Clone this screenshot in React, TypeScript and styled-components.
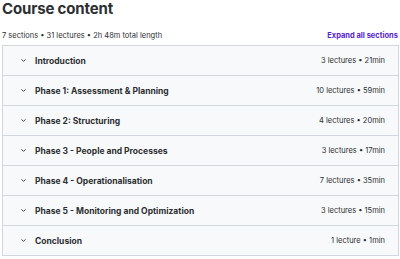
import React from "react";
import styled, { createGlobalStyle } from "styled-components";

const Global = createGlobalStyle`
  html, body { margin: 0; padding: 0; background: #ffffff; }
  body { font-family: Inter, "Noto Sans", sans-serif; color: #2d2f31; }
`;

const Page = styled.div`
  width: 400px;
  padding: 1px 1px 0 2px;
  box-sizing: border-box;
`;

const Title = styled.h2`
  margin: 0;
  font-size: 15px;
  line-height: 16px;
  font-weight: 700;
  letter-spacing: -0.15px;
`;

const Meta = styled.div`
  display: flex;
  justify-content: space-between;
  align-items: center;
  height: 14px;
  margin-top: 11px;
  margin-bottom: 3px;
  font-size: 7.5px;
`;

const Expand = styled.button`
  border: 0;
  background: none;
  padding: 0 1px 0 0;
  font-family: inherit;
  font-size: 7.5px;
  font-weight: 700;
  color: #5624d0;
  cursor: pointer;
`;

const Accordion = styled.div`
  border: 1px solid #d1d7dc;
  border-bottom: 0;
`;

const Row = styled.div`
  display: flex;
  align-items: center;
  height: 29px;
  padding: 0 13px 0 17px;
  background: #f7f9fa;
  border-bottom: 1px solid #d1d7dc;
`;

const Chevron = styled.svg`
  width: 7px;
  height: 7px;
  margin-right: 8px;
  flex: none;
`;

const Name = styled.span`
  flex: 1;
  font-size: 8.5px;
  font-weight: 700;
`;

const Info = styled.span`
  font-size: 7.5px;
  color: #2d2f31;
`;

const sections = [
  ["Introduction", "3 lectures • 21min"],
  ["Phase 1: Assessment & Planning", "10 lectures • 59min"],
  ["Phase 2: Structuring", "4 lectures • 20min"],
  ["Phase 3 - People and Processes", "3 lectures • 17min"],
  ["Phase 4 - Operationalisation", "7 lectures • 35min"],
  ["Phase 5 - Monitoring and Optimization", "3 lectures • 15min"],
  ["Conclusion", "1 lecture • 1min"],
];

export default function App() {
  return (
    <Page>
      <Global />
      <Title>Course content</Title>
      <Meta>
        <span>7 sections • 31 lectures • 2h 48m total length</span>
        <Expand>Expand all sections</Expand>
      </Meta>
      <Accordion>
        {sections.map(([name, info]) => (
          <Row key={name}>
            <Chevron viewBox="0 0 24 24" fill="none" stroke="#2d2f31" strokeWidth="3" strokeLinecap="round" strokeLinejoin="round">
              <path d="M6 9l6 6 6-6" />
            </Chevron>
            <Name>{name}</Name>
            <Info>{info}</Info>
          </Row>
        ))}
      </Accordion>
    </Page>
  );
}
